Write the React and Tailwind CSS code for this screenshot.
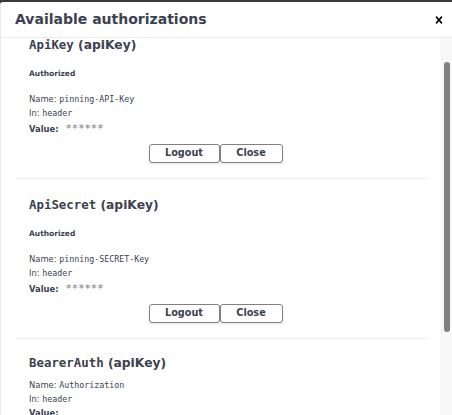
import React from "react";

const SANS = "font-['DejaVu_Sans',sans-serif]";
const MONO = "font-['DejaVu_Sans_Mono',monospace]";

function Row({ label, value }) {
  return (
    <div className={`h-[14px] leading-[14px] text-[8.4px] text-[#3b4151] ${SANS}`}>
      {label} <span className={`${MONO} text-[8.3px]`}>{value}</span>
    </div>
  );
}

function Heading({ code }) {
  return (
    <div className={`h-[16px] leading-[16px] text-[12.3px] font-bold text-[#3b4151] whitespace-nowrap ${SANS}`}>
      <span className={`${MONO} text-[12.4px]`}>{code}</span> (apiKey)
    </div>
  );
}

function ValueRow() {
  return (
    <div className={`mt-[2px] h-[14px] leading-[14px] flex items-center text-[8.4px] text-[#3b4151] ${SANS}`}>
      <span className="font-bold">Value:</span>
      <span className={`ml-[7px] ${MONO} text-[10.5px] text-[#7b7b7b] leading-[14px] -mt-[3px]`}>******</span>
    </div>
  );
}

function Buttons() {
  return (
    <div className="mt-[8px] flex justify-center">
      <button className={`w-[71px] h-[19px] flex items-center justify-center border-[1.5px] border-[#808080] rounded-[3px] bg-white text-[9.7px] font-bold text-[#3b4151] shadow-[0_1px_2px_rgba(0,0,0,0.1)] ${SANS}`}>
        Logout
      </button>
      <button className={`w-[63px] h-[19px] mr-[11px] flex items-center justify-center border-[1.5px] border-[#808080] rounded-[3px] bg-white text-[9.7px] font-bold text-[#3b4151] shadow-[0_1px_2px_rgba(0,0,0,0.1)] ${SANS}`}>
        Close
      </button>
    </div>
  );
}

function AuthorizedSection({ code, keyName }) {
  return (
    <div className="pt-[18px] pb-[15px] px-[14px] border-b border-[#ebebeb]">
      <Heading code={code} />
      <div className={`mt-[16px] h-[10px] leading-[10px] text-[7.5px] font-bold text-[#3b4151] ${SANS}`}>
        Authorized
      </div>
      <div className="mt-[13px]">
        <Row label="Name:" value={keyName} />
        <Row label="In:" value="header" />
        <ValueRow />
      </div>
      <Buttons />
    </div>
  );
}

export default function App() {
  return (
    <div className="w-[452px] h-[415px] bg-[#3a3a3a] overflow-hidden">
      <div className="mt-[2px] h-[413px] bg-white border-l border-[#ebebeb] rounded-tl-[3px] flex flex-col">
        <div className="h-[36px] shrink-0 border-b border-[#ebebeb] flex items-center">
          <h3 className={`flex-1 pl-[14px] text-[14px] font-bold text-[#3b4151] ${SANS}`}>
            Available authorizations
          </h3>
          <button className="pl-[7px] pr-[6px] flex items-center">
            <svg width="14" height="14" viewBox="0 0 20 20" aria-hidden="true">
              <path
                fill="#000"
                d="M14.348 14.849a1.2 1.2 0 0 1-1.697 0L10 11.819l-2.651 3.029a1.2 1.2 0 1 1-1.697-1.697l2.758-3.15-2.759-3.152a1.2 1.2 0 1 1 1.697-1.697L10 8.183l2.651-3.031a1.2 1.2 0 1 1 1.697 1.697l-2.758 3.152 2.758 3.15a1.2 1.2 0 0 1 0 1.698z"
              />
            </svg>
          </button>
        </div>
        <div className="flex-1 flex overflow-hidden">
          <div className="flex-1 px-[14px] overflow-hidden">
            <div className="-mt-[19px]">
              <AuthorizedSection code="ApiKey" keyName="pinning-API-Key" />
              <AuthorizedSection code="ApiSecret" keyName="pinning-SECRET-Key" />
              <div className="pt-[16px] px-[14px]">
                <Heading code="BearerAuth" />
                <div className="mt-[7px]">
                  <Row label="Name:" value="Authorization" />
                  <Row label="In:" value="header" />
                  <div className={`h-[14px] leading-[14px] text-[8.4px] font-bold text-[#3b4151] ${SANS}`}>Value:</div>
                </div>
              </div>
            </div>
          </div>
          <div className="w-[11px] shrink-0 bg-[#f8f8f8] border-l border-[#efefef] pl-[2px]">
            <div className="mt-[24px] w-[6px] h-[270px] rounded-full bg-[#7f7f7f]" />
          </div>
        </div>
      </div>
    </div>
  );
}
